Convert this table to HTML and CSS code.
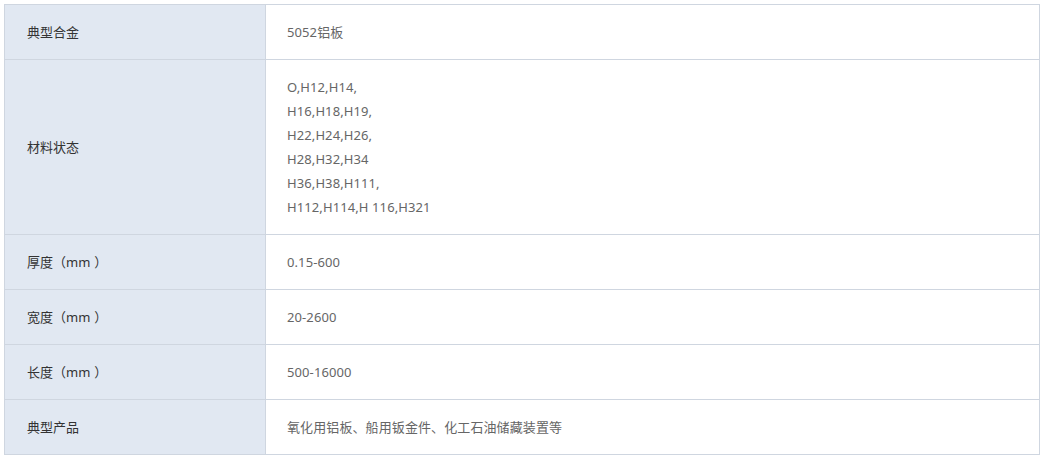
FILE: index.html
```html
<!DOCTYPE html>
<html lang="zh">
<head>
<meta charset="utf-8">
<link rel="stylesheet" href="styles.css">
</head>
<body>
<div class="wrap">
<table class="spec">
<colgroup><col class="c-label"><col class="c-value"></colgroup>
<tbody>
<tr><th>典型合金</th><td>5052铝板</td></tr>
<tr><th>材料状态</th><td>O,H12,H14,<br>H16,H18,H19,<br>H22,H24,H26,<br>H28,H32,H34<br>H36,H38,H111,<br>H112,H114,H 116,H321</td></tr>
<tr><th>厚度（<span class="unit">mm</span>）</th><td>0.15-600</td></tr>
<tr><th>宽度（<span class="unit">mm</span>）</th><td>20-2600</td></tr>
<tr><th>长度（<span class="unit">mm</span>）</th><td>500-16000</td></tr>
<tr><th>典型产品</th><td>氧化用铝板、船用钣金件、化工石油储藏装置等</td></tr>
</tbody>
</table>
</div>
</body>
</html>
```
FILE: styles.css
```css
html, body { margin: 0; padding: 0; background: #fff; }
.wrap { padding: 4px; }
.spec {
  width: 1036px;
  border-collapse: collapse;
  table-layout: fixed;
  font-family: "Noto Sans", "Noto Sans CJK SC", sans-serif;
  font-size: 13px;
}
.c-label { width: 261px; }
.spec th, .spec td {
  border: 1px solid #cfd6e0;
  padding: 15px 21px;
  line-height: 24px;
  text-align: left;
  vertical-align: middle;
}
.spec th {
  background: #e1e8f2;
  color: #333;
  font-weight: normal;
  padding-left: 22px;
}
.spec td { color: #666; letter-spacing: 0.1px; }
.unit { margin-right: 4px; }
```
